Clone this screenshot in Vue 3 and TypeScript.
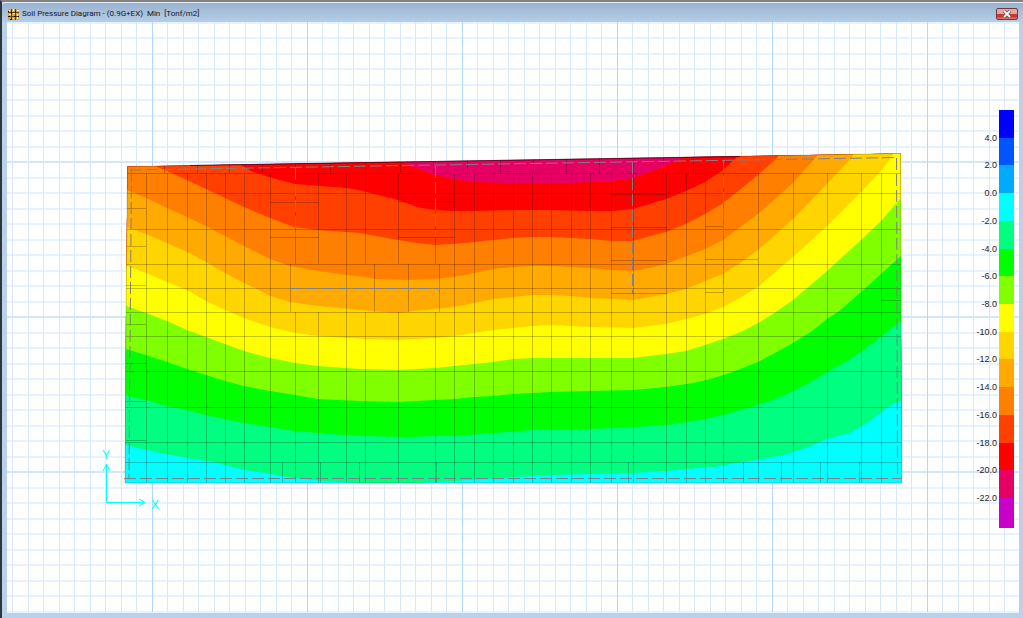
<script setup lang="ts">
interface Band {
  color: string
  edge: string
}

interface Line {
  x1: number
  y1: number
  x2: number
  y2: number
}

const line = (x1: number, y1: number, x2: number, y2: number): Line => ({ x1, y1, x2, y2 })
const path = (lines: Line[]): string => lines.map(l => `M${l.x1} ${l.y1}L${l.x2} ${l.y2}`).join('')

// Background grid: ten minor divisions per major division
const minorV: Line[] = []
const majorV: Line[] = []
for (let i = -10; i <= 56; i++) {
  const x = Math.floor(152 + i * 15.5) + 0.5
  const target = i % 10 === 0 ? majorV : minorV
  target.push(line(x, 22, x, 612))
}
const minorH: Line[] = []
const majorH: Line[] = []
for (let i = -9; i <= 29; i++) {
  const y = Math.round(162 + i * 15.5)
  const target = i % 10 === 0 ? majorH : minorH
  target.push(line(7, y, 1019, y))
}

// Upper edge of each pressure band, listed from the most negative value upwards
const bands: Band[] = [
  { color: '#ff0000', edge: '400,150 400,162 417,168 435,175 454,179 474,182 513,183 570,183 590,182 612,181 633,178 655,170 672,163 685,157 685,150' },
  { color: '#ff4000', edge: '237,150 237,163 253,172 272,178 295,184 320,186 347,188 363,191 398,200 417,207 433,210 454,211 474,211 513,210 550,210 590,211 612,211 633,209 666,199 686,191 705,182 723,170 737,157 737,150' },
  { color: '#ff8000', edge: '155,150 155,166 167,171 206,189 244,207 270,218 294,227 317,230 360,233 365,234 398,240 417,243 435,245 454,244 474,242 493,240 513,238 533,237 551,237 571,238 590,239 612,241 632,241 640,239 666,232 686,224 705,214 723,203 737,192 758,175 778,157 778,150' },
  { color: '#ffaa00', edge: '120,188 127,190 146,198 167,208 187,217 206,226 225,236 244,246 270,259 290,266 318,271 347,275 365,277 375,279 408,280 435,279 454,277 474,273 493,269 513,267 533,266 551,266 571,267 590,268 612,270 632,271 640,270 666,264 705,249 723,240 758,214 793,183 817,156 817,150' },
  { color: '#ffd500', edge: '120,224 127,227 146,234 167,243 187,252 206,262 225,273 244,283 257,289 270,296 290,302 318,306 360,310 383,312 400,313 413,311 435,309 454,307 474,303 493,299 513,297 533,295 551,295 571,296 590,298 612,299 633,300 666,294 686,289 705,281 723,274 740,263 758,250 793,219 827,184 840,170 853,156 853,150' },
  { color: '#ffff00', edge: '120,264 127,266 146,273 167,282 187,290 206,301 225,310 244,318 270,327 295,333 318,336 347,338 365,339 398,340 435,338 454,336 474,333 493,330 513,328 533,326 551,325 590,327 633,328 666,324 686,319 705,314 723,307 740,298 758,287 793,257 827,226 861,192 881,171 893,155 893,150' },
  { color: '#80ff00', edge: '120,304 126,306 146,313 167,321 187,330 206,337 225,344 244,351 270,358 295,363 318,366 360,369 398,370 435,368 454,366 474,364 493,362 513,359 533,358 551,358 612,358 633,358 666,354 686,351 705,345 723,339 743,331 758,323 773,314 793,300 827,271 861,240 881,221 901,198 910,188' },
  { color: '#00ff00', edge: '120,347 126,349 146,355 167,362 187,369 206,375 225,381 244,386 270,391 295,395 318,399 360,401 398,402 435,400 454,399 474,397 493,396 513,394 533,393 551,392 590,391 633,390 666,387 693,383 710,379 730,373 758,362 773,354 793,343 812,331 827,319 838,312 861,292 881,274 901,256 910,248' },
  { color: '#00ff80', edge: '120,393 125,395 146,400 167,406 187,410 206,415 225,419 244,423 270,427 295,431 318,433 360,436 408,437 435,436 454,436 493,433 533,430 590,429 633,427 666,425 686,422 710,418 733,412 758,405 783,396 807,384 827,372 850,359 873,343 888,331 901,321 910,314' },
  { color: '#00ffff', edge: '120,444 125,445 160,453 187,458 213,462 240,469 270,474 295,478 323,481 343,482 370,484 410,484 430,482 454,481 483,479 513,477 551,475 590,474 633,473 666,471 686,469 713,467 743,462 763,459 783,455 803,449 818,443 827,439 850,433 870,421 888,407 901,401 910,398' },
]

const slab = '127.5,166.5 900.5,153.5 901,330 902,483 125,483 126,310'

// Finite element mesh
const fullColumns = [146.5, 167.5, 187.5, 206.5, 225.5, 244.5, 270.5, 346.5, 454.5, 474.5, 493.5, 513.5, 532.5, 551.5, 571.5, 590.5, 611.5, 633.5, 666.5, 686.5, 705.5, 723.5, 758.5, 793.5, 827.5, 861.5, 881.5]
const splitColumns = [295.5, 318.5, 365.5, 398.5, 435.5]
const rows = [173.5, 193.5, 229.5, 264.5, 288.5, 312.5, 336.5, 371.5, 407.5, 442.5, 462.5]
const topTicks = [164.5, 197.5, 229.5, 262.5, 295.5, 330.5, 365.5, 400.5, 433.5, 467.5, 500.5, 533.5, 566.5, 599.5, 633.5, 663.5, 693.5]
const bottomTicks = [282.5, 320.5, 359.5, 436.5, 628.5, 743.5, 781.5, 820.5, 859.5]

const mesh: Line[] = [
  ...fullColumns.map(x => line(x, 173, x, 483)),
  ...splitColumns.flatMap(x => [line(x, 173, x, 264), line(x, 312, x, 483)]),
  ...rows.map(y => line(125, y, 902, y)),
  ...topTicks.map(x => line(x, 158, x, 173)),
  ...bottomTicks.map(x => line(x, 462, x, 483)),
  ...[208.5, 246.5, 285.5, 324.5, 363.5, 401.5, 440.5].map(y => line(126, y, 146, y)),
  ...[202.5, 237.5].map(y => line(270, y, 319, y)),
  ...[201.5, 237.5].map(y => line(398, y, 455, y)),
  ...[194.5, 227.5, 260.5, 293.5].map(y => line(611, y, 667, y)),
  ...[290.5, 374.5, 408.5, 439.5].map(x => line(x, 264, x, 312)),
  line(705, 226.5, 724, 226.5),
  line(705, 259.5, 758, 259.5),
  line(705, 292.5, 724, 292.5),
  line(881, 300.5, 901, 300.5),
]

const walls: Line[] = [
  line(130, 170, 898, 157.5),
  line(131.5, 170, 129, 478),
  line(124, 478.5, 902, 478.5),
  line(896.5, 158, 897.5, 478),
  line(295.5, 168, 295.5, 237),
  line(435.5, 166, 435.5, 237),
  line(632.5, 162, 632.5, 293),
  line(723.5, 160, 723.5, 293),
  line(290, 288.5, 440, 288.5),
]

const legend = [
  { color: '#0000ff', label: '4.0' },
  { color: '#0055ff', label: '2.0' },
  { color: '#00aaff', label: '0.0' },
  { color: '#00ffff', label: '-2.0' },
  { color: '#00ff80', label: '-4.0' },
  { color: '#00ff00', label: '-6.0' },
  { color: '#80ff00', label: '-8.0' },
  { color: '#ffff00', label: '-10.0' },
  { color: '#ffd500', label: '-12.0' },
  { color: '#ffaa00', label: '-14.0' },
  { color: '#ff8000', label: '-16.0' },
  { color: '#ff4000', label: '-18.0' },
  { color: '#ff0000', label: '-20.0' },
  { color: '#e60064', label: '-22.0' },
  { color: '#c800c8', label: '' },
]
</script>

<template>
  <main class="window">
    <header class="titlebar">
      <svg class="app-icon" viewBox="0 0 11 11" aria-hidden="true">
        <rect width="11" height="11" fill="#5a4420" />
        <path d="M0 0h3v3H0zM4 0h3v3H4zM8 0h3v3H8zM0 4h3v3H0zM4 4h3v3H4zM8 4h3v3H8zM0 8h3v3H0zM4 8h3v3H4zM8 8h3v3H8z" fill="#d9a441" />
        <path d="M1 1h1v1H1zM5 0h1v2H5zM9 1h2v1H9zM1 5h2v1H1zM5 4h2v1H5zM9 5h1v2H9zM5 9h1v1H5zM9 8h1v2H9z" fill="#fff0b8" />
        <path d="M0 2h1v1H0zM3 3h1v2H3zM7 2h1v2H7zM0 7h2v1H0zM6 7h2v1H6zM2 10h2v1H2zM10 7h1v1h-1z" fill="#1c1408" />
      </svg>
      <h1 class="title">Soil Pressure Diagram - (0.9G+EX)&nbsp; Min&nbsp; [Tonf/m2]</h1>
      <button class="close" type="button" aria-label="Close">
        <svg viewBox="0 0 20 10" aria-hidden="true">
          <path d="M7 2l6 6M13 2l-6 6" stroke="#6b5560" stroke-width="3.4" />
          <path d="M7 2l6 6M13 2l-6 6" stroke="#f4f4f4" stroke-width="1.8" />
        </svg>
      </button>
    </header>

    <section class="canvas">
      <svg class="plot" viewBox="7 22 1012 591" preserveAspectRatio="xMinYMin meet" role="img" aria-label="Soil pressure contours">
        <defs>
          <clipPath id="slab-clip"><polygon :points="slab" /></clipPath>
        </defs>
        <path :d="path(minorH)" class="minor-h" />
        <path :d="path(majorH)" class="major-h" />
        <path :d="path(minorV)" class="minor-v" />
        <path :d="path(majorV)" class="major-v" />

        <g clip-path="url(#slab-clip)">
          <rect x="120" y="150" width="790" height="340" fill="#e60064" />
          <polygon v-for="b in bands" :key="b.color" :points="`120,150 ${b.edge} 910,150 910,490 120,490`" :fill="b.color" />
          <path :d="path(mesh)" class="mesh" />
        </g>
        <polygon :points="slab" class="outline" />
        <path d="M190 165.500L740 156.500" class="top-edge" />
        <path :d="path(walls)" class="walls" />

        <g class="axes">
          <path d="M106.500 465V502.500H145M103 471l3.500-7 3.500 7M139 499l6 3.500-6 3.500" />
          <text x="106" y="459">Y</text>
          <text x="155" y="509">X</text>
        </g>
      </svg>

      <ul class="legend" aria-label="Pressure scale">
        <li v-for="item in legend" :key="item.color" class="step">
          <span class="value">{{ item.label }}</span>
          <span class="swatch" :style="{ background: item.color }"></span>
        </li>
      </ul>
    </section>
  </main>
</template>

<style>
body {
  margin: 0;
}
</style>

<style scoped>
.window {
  box-sizing: border-box;
  display: flex;
  flex-direction: column;
  height: 100vh;
  padding: 0 4px 5px 5px;
  border-top: 2px solid #808080;
  border-left: 2px solid #30363e;
  background: #b9d1ea;
  font-family: "Liberation Sans", Arial, sans-serif;
}

.titlebar {
  display: flex;
  align-items: center;
  gap: 3px;
  height: 20px;
  margin: 0 -4px 0 -5px;
  padding: 3px 5px 0 6px;
  box-sizing: border-box;
  border-top: 1px solid #e4eef8;
  border-top-left-radius: 4px;
  background: linear-gradient(#98b2cf, #b7cee7);
}

.app-icon {
  width: 11px;
  height: 11px;
}

.title {
  flex: 1;
  margin: 0;
  color: #10161e;
  font: 400 8px/12px Roboto, "Noto Sans", sans-serif;
  white-space: nowrap;
}

.close {
  display: flex;
  box-sizing: border-box;
  width: 22px;
  height: 12px;
  padding: 0;
  border: 1px solid #6d3b42;
  border-radius: 2px;
  background: linear-gradient(#eaa49e 0 45%, #c9372f 50% 75%, #dc8178);
}

.close svg {
  width: 20px;
  height: 10px;
  fill: none;
}

.canvas {
  position: relative;
  flex: 1;
  min-height: 0;
  background: #fff;
}

.plot {
  display: block;
  width: 100%;
  height: 100%;
}

.plot path {
  fill: none;
}

.minor-v {
  stroke: #d6e8fb;
}

.major-v {
  stroke: #b0d8fb;
}

.minor-h {
  stroke: #e6f2fd;
  stroke-width: 2;
}

.major-h {
  stroke: #d0e7fc;
  stroke-width: 2;
}

.mesh {
  stroke: #000;
  stroke-opacity: 0.23;
}

.outline {
  fill: none;
  stroke: #000;
  stroke-opacity: 0.18;
}

.top-edge {
  stroke: #5a0018;
  stroke-opacity: 0.8;
}

.walls {
  stroke: #808088;
  stroke-dasharray: 12 4;
}

.axes {
  stroke: #00ffff;
}

.axes text {
  fill: #00ffff;
  stroke: none;
  font-size: 12px;
  text-anchor: middle;
}

.legend {
  position: absolute;
  top: 88px;
  right: 5px;
  display: grid;
  grid-template-rows: repeat(14, 1fr) 30px;
  height: 418px;
  margin: 0;
  padding: 0;
  list-style: none;
}

.step {
  display: flex;
  align-items: flex-end;
  justify-content: flex-end;
  gap: 2px;
}

.value {
  margin-bottom: -6px;
  color: #222;
  font-size: 9px;
  line-height: 12px;
}

.swatch {
  align-self: stretch;
  width: 15px;
}
</style>
